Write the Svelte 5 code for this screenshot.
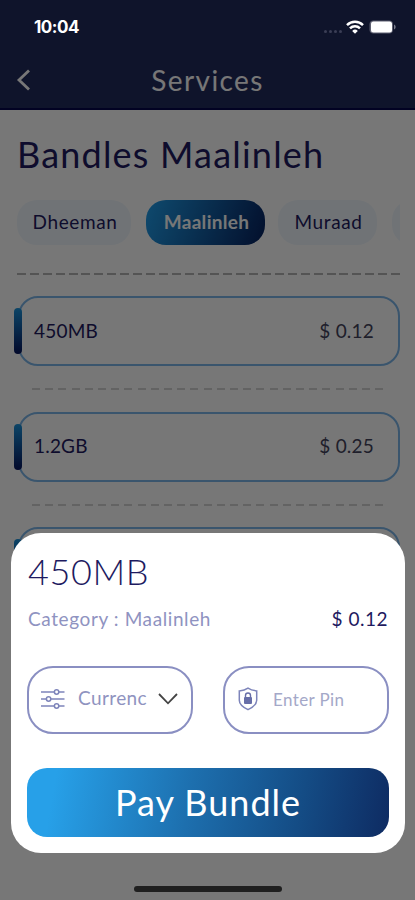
<script lang="ts">
  type Bundle = { name: string; price: string };

  const tabs = ['Dheeman', 'Maalinleh', 'Muraad'];
  const bundles: Bundle[] = [
    { name: '450MB', price: '$ 0.12' },
    { name: '1.2GB', price: '$ 0.25' },
    { name: '', price: '' },
  ];

  let active = $state('Maalinleh');
  let selected = $state(bundles[0]);
</script>

<div class="screen">
  <header class="header">
    <div class="nav">
      <button class="nav__back" aria-label="Back">
        <svg width="14" height="22" viewBox="0 0 14 22">
          <path d="M13 1.500 3 11 13 20.500" fill="none" stroke="currentColor" stroke-width="2.800" />
        </svg>
      </button>
      <h1 class="nav__title">Services</h1>
    </div>
  </header>

  <main class="content">
    <h2 class="content__title">Bandles Maalinleh</h2>
    <div class="tabs">
      {#each tabs as tab}
        <button class="tab" class:tab--on={tab === active} onclick={() => (active = tab)}>{tab}</button>
      {/each}
      <span class="tab"></span>
    </div>
    <div class="dashes dashes--wide"></div>
    {#each bundles as bundle}
      <button class="bundle" onclick={() => (selected = bundle)}>
        <span class="bundle__accent"></span>
        <span class="bundle__name">{bundle.name}</span>
        <span class="bundle__price">{bundle.price}</span>
      </button>
      <div class="dashes"></div>
    {/each}
  </main>

  <div class="scrim"></div>

  <div class="status">
    <span class="status__time">10:04</span>
    <span class="status__dots"><i></i><i></i><i></i><i></i></span>
    <svg class="status__wifi" width="18" height="14" viewBox="0 0 18 14">
      <g fill="none" stroke="#fff" stroke-width="2.5">
        <path d="M1 5.1a11.5 11.5 0 0 1 16 0" />
        <path d="M4 8.3a7.2 7.2 0 0 1 10 0" />
      </g>
      <path d="M9 13.8 6.2 10.9a4 4 0 0 1 5.6 0z" fill="#fff" />
    </svg>
    <svg class="status__battery" width="27" height="14" viewBox="0 0 27 14">
      <rect x=".5" y=".5" width="23.500" height="13" rx="4" fill="#5d5f70" />
      <rect x="2" y="1.500" width="21" height="11" rx="2.500" fill="#fff" />
      <path d="M25 4.500c2.200.8 2.200 4.200 0 5z" fill="#777989" />
    </svg>
  </div>

  <section class="sheet">
    <h2 class="sheet__title">{selected.name}</h2>
    <div class="sheet__row">
      <span class="sheet__category">Category : {active}</span>
      <span class="sheet__price">{selected.price}</span>
    </div>
    <div class="fields">
      <div class="field">
        <svg class="field__sliders" width="24" height="20" viewBox="0 0 24 20">
          <g fill="none" stroke="#7d84ba" stroke-width="1.5">
            <path d="M0 3h13.2M18 3h5.500M0 10h5.200M10 10h13.500M0 17h13.200M18 17h5.500" />
            <circle cx="15.6" cy="3" r="2.2" />
            <circle cx="7.6" cy="10" r="2.2" />
            <circle cx="15.6" cy="17" r="2.2" />
          </g>
        </svg>
        <span class="field__currency">Currenc</span>
        <svg class="field__chevron" width="20" height="12" viewBox="0 0 20 12">
          <path d="m1 1 9 9.300L19 1" fill="none" stroke="#444" stroke-width="1.800" />
        </svg>
      </div>
      <div class="field field--pin">
        <svg class="field__shield" width="20" height="24" viewBox="0 0 20 24">
          <path
            d="M10 1.200C7.500 3 4.600 3.700 1.300 3.900v9.300c0 4.300 3.700 7 8.700 9.500 5-2.500 8.700-5.200 8.700-9.500V3.900C15.400 3.700 12.500 3 10 1.200z"
            fill="none"
            stroke="#7d84ba"
            stroke-width="1.500"
          />
          <rect x="6" y="10" width="8" height="7" rx="1" fill="#676ea8" />
          <path d="M7.500 10.500V8.500a2.500 2.500 0 0 1 5 0v2" fill="none" stroke="#676ea8" stroke-width="1.400" />
        </svg>
        <span class="field__pin">Enter Pin</span>
      </div>
    </div>
    <button class="pay">Pay Bundle</button>
  </section>

  <div class="home"></div>
</div>

<style>
  :global(body) {
    background: #767676;
  }

  .screen {
    position: relative;
    width: 415px;
    height: 900px;
    overflow: hidden;
    background: #fff;
    color: #1e1a60;
    font-family: Lato, 'Open Sans', sans-serif;
  }
  h1,
  h2 {
    margin: 0;
    font-weight: 400;
  }
  button {
    margin: 0;
    padding: 0;
    border: 0;
    background: none;
    color: inherit;
    font: inherit;
  }

  .header {
    box-sizing: border-box;
    height: 110px;
    padding-top: 54px;
    background: #222b5d;
    border-bottom: 2px solid #05054c;
  }
  .nav {
    display: grid;
    grid-template-columns: 46px 1fr 46px;
    align-items: center;
    height: 52px;
    color: #fff;
  }
  .nav__back {
    height: 22px;
    margin-left: 16px;
    text-align: left;
  }
  .nav__back svg {
    display: block;
  }
  .nav__title {
    font-size: 28px;
    letter-spacing: 1.4px;
    text-align: center;
  }

  .content {
    padding: 23px 15px 0 17px;
  }
  .content__title {
    font-size: 36px;
    line-height: 42px;
    letter-spacing: 1.2px;
    white-space: nowrap;
  }
  .tabs {
    display: flex;
    gap: 15px;
    margin-top: 25px;
    overflow: hidden;
  }
  .tab {
    box-sizing: border-box;
    flex: none;
    width: 114px;
    height: 45px;
    padding: 0 0 2px 2px;
    border-radius: 20px;
    background: #f1f7fd;
    font-size: 19px;
    letter-spacing: 0.6px;
  }
  .tab--on {
    width: 119px;
    background: linear-gradient(110deg, #209fec, #06205e);
    color: #fff;
    font-weight: 700;
    letter-spacing: 0.3px;
  }
  .tab:nth-child(3) {
    width: 99px;
    margin-left: -2px;
  }

  .dashes {
    height: 2px;
    margin: 22px 16px 21.5px 15px;
    background: repeating-linear-gradient(90deg, #d4d4d4 0 8px, transparent 8px 13.2px);
  }
  .dashes--wide {
    margin: 28px 0 21px;
    background: repeating-linear-gradient(90deg, #b4b4b4 0 9px, transparent 9px 12.9px);
  }

  .bundle {
    position: relative;
    box-sizing: border-box;
    display: flex;
    align-items: center;
    justify-content: space-between;
    width: 382px;
    height: 70px;
    margin-left: 1px;
    padding: 0 24px 2px 14px;
    border: 2px solid #7cb6ea;
    border-radius: 20px;
    font-size: 19px;
  }
  .bundle__accent {
    position: absolute;
    top: 10px;
    left: -6px;
    width: 8px;
    height: 46px;
    border-radius: 4px;
    background: linear-gradient(#1b93dc, #06145c);
  }
  .bundle__name {
    letter-spacing: 0.2px;
  }
  .bundle__price {
    color: #44445c;
    letter-spacing: 0.2px;
  }

  .scrim {
    position: absolute;
    inset: 0;
    background: rgba(0, 0, 0, 0.535);
  }

  .status {
    position: absolute;
    top: 14px;
    left: 34px;
    right: 18px;
    display: flex;
    align-items: center;
    height: 26px;
    color: #fff;
  }
  .status__time {
    margin-right: auto;
    font: 700 17px/26px Inter, sans-serif;
    letter-spacing: -0.5px;
  }
  .status__dots {
    display: flex;
    gap: 2px;
    margin: 9px 5px 0 0;
  }
  .status__dots i {
    width: 3px;
    height: 3px;
    border-radius: 50%;
    background: #3b3e55;
  }
  .status__wifi,
  .status__battery {
    position: relative;
    left: -1px;
  }
  .status__battery {
    margin-left: 5px;
  }

  .sheet {
    position: absolute;
    top: 533px;
    left: 11px;
    box-sizing: border-box;
    width: 394px;
    height: 320px;
    padding: 17px 16px 16px;
    border-radius: 30px;
    background: #fff;
  }
  .sheet__title {
    margin-left: 1px;
    font-size: 36px;
    font-weight: 300;
    line-height: 42px;
    letter-spacing: 0.6px;
  }
  .sheet__row {
    display: flex;
    justify-content: space-between;
    margin: 14px 1px 0;
    font-size: 19px;
    line-height: 26px;
  }
  .sheet__category {
    color: #8f93c1;
    letter-spacing: 0.6px;
  }
  .sheet__price {
    letter-spacing: 0.5px;
  }

  .fields {
    display: flex;
    justify-content: space-between;
    margin-top: 34px;
  }
  .field {
    box-sizing: border-box;
    display: flex;
    align-items: center;
    width: 166px;
    height: 68px;
    padding: 0 12px 2px;
    border: 2px solid #8a8fc2;
    border-radius: 26px;
    color: #8f93bf;
  }
  .field__currency {
    width: 70px;
    margin: -3px 10px 0 13px;
    font-size: 19px;
    letter-spacing: 0.4px;
    white-space: nowrap;
  }
  .field--pin {
    padding-left: 13px;
  }
  .field__pin {
    margin-left: 15px;
    color: #a4a8c8;
    font-size: 17px;
    letter-spacing: 0.4px;
  }

  .pay {
    display: block;
    width: 362px;
    height: 69px;
    margin-top: 34px;
    padding-bottom: 2px;
    border-radius: 20px;
    background: linear-gradient(100deg, #27a0e8 8%, #1d6fae 45%, #144c85 75%, #0e2b62);
    color: #fff;
    font-size: 36px;
    letter-spacing: 1px;
  }

  .home {
    position: absolute;
    bottom: 8px;
    left: 134px;
    width: 148px;
    height: 6px;
    border-radius: 3px;
    background: #1f1f1f;
  }
</style>
